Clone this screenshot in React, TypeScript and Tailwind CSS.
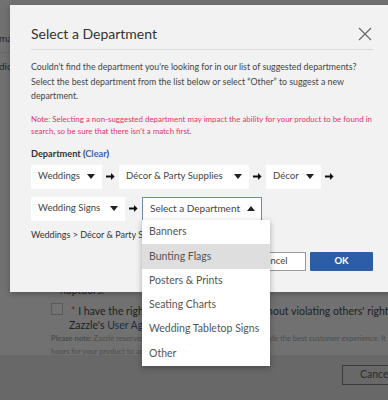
import { ReactNode } from 'react';

const FONT = { fontFamily: 'Lato, "Open Sans", Arial, sans-serif' };

const Caret = ({ up = false }: { up?: boolean }) => (
  <svg width="8" height="5" viewBox="0 0 8 5" className="shrink-0">
    <path d={up ? 'M0 5 L4 0 L8 5 Z' : 'M0 0 L8 0 L4 5 Z'} fill="#222" />
  </svg>
);

const Arrow = () => (
  <svg width="9" height="9" viewBox="0 0 9 9" className="mx-[4px] shrink-0">
    <path d="M0 3.6 H5 V1 L8.6 4.5 L5 8 V5.4 H0 Z" fill="#111" />
  </svg>
);

function SelectBox({ label, open = false, className = '' }: { label: string; open?: boolean; className?: string }) {
  return (
    <div
      className={`flex h-[24px] shrink-0 items-center justify-between gap-[5px] bg-white text-[#444] ${
        open ? 'border border-[#7186b1] pl-[7px] pr-[6px] text-[10px]' : 'px-[7px] text-[9.6px]'
      } ${className}`}
    >
      <span className="whitespace-nowrap">{label}</span>
      <Caret up={open} />
    </div>
  );
}

const ITEMS = ['Banners', 'Bunting Flags', 'Posters & Prints', 'Seating Charts', 'Wedding Tabletop Signs', 'Other'];

function Row({ children }: { children: ReactNode }) {
  return <div className="flex items-center">{children}</div>;
}

export default function App() {
  return (
    <div className="relative h-[400px] w-[388px] overflow-hidden bg-[#686868]" style={FONT}>
      {/* page behind the overlay */}
      <div className="flex h-full">
        <div className="h-[355px] w-[40px] shrink-0 bg-[#717171] pt-[31px] text-[10px] text-[#262626]">
          <p className="-ml-[1px] border-b border-[#666] pb-[6px]">ma</p>
          <p className="mt-[6px] -ml-[1px]">dio</p>
        </div>
        <div className="flex min-w-0 flex-1 flex-col overflow-hidden">
          <div className="h-[355px] bg-[#717171] pl-[11px] pt-[284px] text-[10.5px] text-[#1f1f1f]">
            <p className="pl-[9px] leading-[12px]">nuptuors.</p>
            <div className="mt-[6px] flex items-start gap-[8px]">
              <div className="mt-[1px] h-[12px] w-[12px] shrink-0 border border-[#5a5a5a] bg-[#737373]" />
              <div className="leading-[15px]">
                <p className="whitespace-nowrap pt-[2px]">
                  <span className="text-[#7a1b2b]">*</span> I have the right to publish this design wit hout violating
                  others' rights, and
                </p>
                <p className="-ml-[2px] -mt-[1px]">
                  Zazzle's <span className="text-[#1c2c4c]">User Agreement</span>
                </p>
              </div>
            </div>
            <p className="-mt-[1px] whitespace-nowrap text-[7.5px] leading-[13px] text-[#4c4c4c]">
              <b>Please note:</b> Zazzle reserves the right to remove it in order to provide the best customer experience. It
            </p>
            <p className="whitespace-nowrap text-[7.5px] leading-[13px] text-[#4c4c4c]">
              hours for your product to appear in the marketplace.
            </p>
          </div>
          <div className="flex justify-end pt-[10px]">
            <div className="-mr-[10px] flex h-[20px] w-[56px] shrink-0 items-center border border-[#3a3a3a] pl-[17px] text-[10.5px] text-[#2a2a2a]">
              Cancel
            </div>
          </div>
        </div>
      </div>

      {/* modal */}
      <div className="absolute left-[10px] top-[5px] h-[287px] w-[384px] bg-[#f2f2f2] px-[21px] pt-[19px] shadow-[0_2px_6px_rgba(0,0,0,0.25)]">
        <div className="flex items-center justify-between border-b border-[#dcdcdc] pb-[5px]">
          <h2 className="text-[14px] leading-[20px] text-[#333]">Select a Department</h2>
          <svg width="14" height="14" viewBox="0 0 14 14" className="mr-[1px]">
            <path d="M1 1 L13 13 M13 1 L1 13" stroke="#666" strokeWidth="1.2" />
          </svg>
        </div>
        <p className="mt-[10px] text-[8.8px] leading-[14.5px] text-[#444]">
          Couldn't find the department you're looking for in our list of suggested departments? Select the best
          department from the list below or select “Other” to suggest a new department.
        </p>
        <p className="mt-[9px] text-[7.9px] leading-[12px] text-[#e8336b]">
          Note: Selecting a non-suggested department may impact the ability for your product to be found in search, so
          be sure that there isn't a match first.
        </p>
        <p className="mt-[10px] text-[9.2px] font-bold leading-[14px] text-[#333]">
          Department (<span className="text-[#3a66a7]">Clear</span>)
        </p>
        <div className="mt-[4px] flex flex-col gap-[8px]">
          <Row>
            <SelectBox label="Weddings" className="w-[71px]" />
            <Arrow />
            <SelectBox label="Décor & Party Supplies" className="w-[130px]" />
            <Arrow />
            <SelectBox label="Décor" className="w-[55px]" />
            <Arrow />
          </Row>
          <Row>
            <SelectBox label="Wedding Signs" className="w-[94px]" />
            <Arrow />
            <SelectBox label="Select a Department" open className="w-[120px]" />
          </Row>
        </div>
        <p className="mt-[7px] text-[9px] leading-[14px] text-[#333]">Weddings &gt; Décor &amp; Party Supplies</p>
        <div className="mt-[10px] flex justify-end gap-[4px]">
          <div className="flex h-[19px] w-[65px] items-center justify-center border border-[#999] bg-white text-[9.5px] text-[#444]">
            Cancel
          </div>
          <div className="flex h-[19px] w-[63px] items-center justify-center rounded-[1px] bg-[#2b5ea7] text-[9.5px] font-bold text-white">
            OK
          </div>
        </div>
      </div>

      {/* open dropdown */}
      <ul className="absolute left-[142px] top-[220px] w-[128px] bg-white shadow-[0_2px_6px_rgba(0,0,0,0.3)]">
        {ITEMS.map((it) => (
          <li
            key={it}
            className={`flex h-[24.3px] items-center pl-[7px] text-[10.5px] text-[#555] ${
              it === 'Bunting Flags' ? 'bg-[#dedede]' : ''
            }`}
          >
            {it}
          </li>
        ))}
      </ul>
    </div>
  );
}
